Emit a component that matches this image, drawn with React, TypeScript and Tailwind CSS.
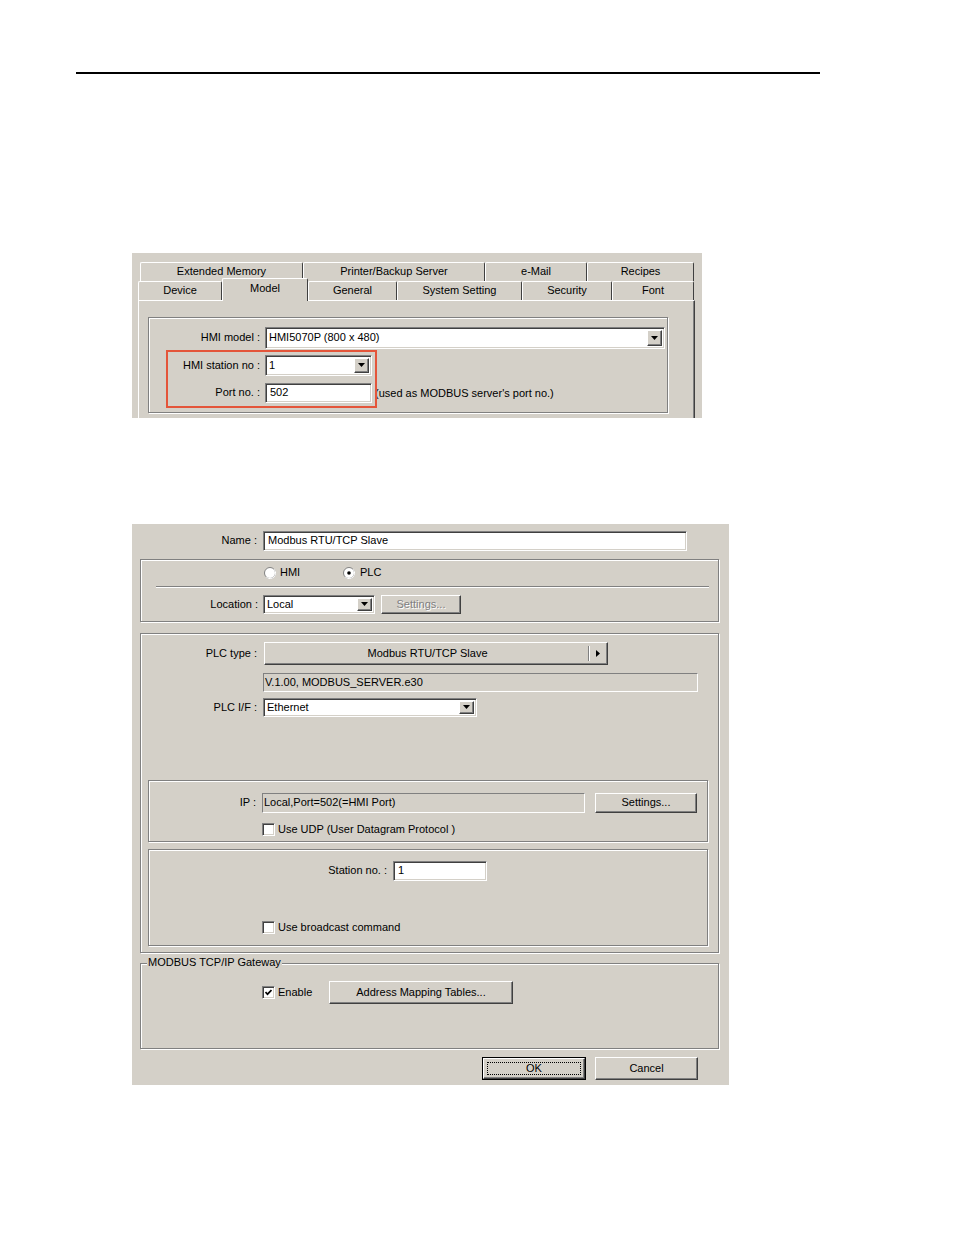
import React from "react";

type Kids = { className?: string; children?: React.ReactNode };

function DownArrow() {
  return (
    <svg width="7" height="4" viewBox="0 0 7 4">
      <path d="M0 0h7L3.5 4z" fill="#000" />
    </svg>
  );
}

function Raised({ className = "", children }: Kids) {
  return (
    <div
      className={`flex items-center justify-center bg-[#d4d0c8] border border-t-white border-l-white border-b-[#404040] border-r-[#404040] shadow-[inset_-1px_-1px_0_#808080] ${className}`}
    >
      {children}
    </div>
  );
}

function Sunken({ className = "", children }: Kids) {
  return (
    <div
      className={`flex items-center bg-white border border-t-[#808080] border-l-[#808080] border-b-white border-r-white shadow-[inset_1px_1px_0_#404040,inset_-1px_-1px_0_#d4d0c8] ${className}`}
    >
      {children}
    </div>
  );
}

function Combo({ className = "", value }: { className?: string; value: string }) {
  return (
    <Sunken className={className}>
      <span className="flex-1 pl-[3px]">{value}</span>
      <Raised className="self-stretch my-[2px] mr-[2px] w-[15px]">
        <DownArrow />
      </Raised>
    </Sunken>
  );
}

// static edge field, gray inside
function Field({ className = "", children }: Kids) {
  return (
    <div
      className={`flex items-center pl-px border border-t-[#808080] border-l-[#808080] border-b-white border-r-white ${className}`}
    >
      {children}
    </div>
  );
}

function Check({ checked = false }: { checked?: boolean }) {
  return (
    <div className="w-[13px] h-[13px] flex items-center justify-center bg-white border border-t-[#808080] border-l-[#808080] border-b-white border-r-white shadow-[inset_1px_1px_0_#404040,inset_-1px_-1px_0_#d4d0c8]">
      {checked && (
        <svg width="7" height="7" viewBox="0 0 7 7">
          <path d="M0.5 3l2 2.2L6.5 1" stroke="#000" strokeWidth="1.7" fill="none" />
        </svg>
      )}
    </div>
  );
}

function Radio({ on = false }: { on?: boolean }) {
  return (
    <svg width="12" height="12" viewBox="0 0 12 12">
      <circle cx="6" cy="6" r="5.5" fill="#fff" stroke="#808080" />
      <path d="M10 2.2A5.5 5.5 0 0 1 2.2 10" stroke="#fff" fill="none" />
      {on && <circle cx="6" cy="6" r="1.8" fill="#000" />}
    </svg>
  );
}

function Group({ className = "", children }: Kids) {
  return (
    <div
      className={`relative border border-[#808080] shadow-[1px_1px_0_#fff,inset_1px_1px_0_#fff] ${className}`}
    >
      {children}
    </div>
  );
}

function Tab({ w, label, active = false }: { w: string; label: string; active?: boolean }) {
  return (
    <div
      className={`flex justify-center border-t border-l border-r border-t-white border-l-white border-r-[#404040] rounded-t-[2px] bg-[#d4d0c8] ${w} ${
        active ? "h-[23px] -mb-px relative z-10 pt-[4px] items-start" : "h-[19px] items-center"
      }`}
    >
      {label}
    </div>
  );
}

function ModelDialog() {
  return (
    <div className="w-[570px] h-[165px] bg-[#d4d0c8] overflow-hidden flex flex-col">
      <div className="flex ml-[8px] mt-[9px]">
        <Tab w="w-[163px]" label="Extended Memory" />
        <Tab w="w-[182px]" label="Printer/Backup Server" />
        <Tab w="w-[102px]" label="e-Mail" />
        <Tab w="w-[107px]" label="Recipes" />
      </div>
      <div className="flex items-end ml-[6px] h-[19px]">
        <Tab w="w-[84px]" label="Device" />
        <Tab w="w-[86px]" label="Model" active />
        <Tab w="w-[89px]" label="General" />
        <Tab w="w-[125px]" label="System Setting" />
        <Tab w="w-[90px]" label="Security" />
        <Tab w="w-[82px]" label="Font" />
      </div>
      <div className="ml-[6px] w-[557px] flex-1 border-t border-l border-r border-t-white border-l-white border-r-[#404040] shadow-[inset_-1px_0_0_#808080]">
        <Group className="ml-[9px] mt-[16px] w-[520px] h-[96px]">
          <div className="flex items-center mt-[9px] h-[22px]">
            <span className="w-[111px] text-right">HMI model :</span>
            <Combo className="ml-[5px] w-[400px] h-[22px]" value="HMI5070P (800 x 480)" />
          </div>
          <div className="flex items-center mt-[6px] h-[21px]">
            <span className="w-[111px] text-right">HMI station no :</span>
            <Combo className="ml-[5px] w-[107px] h-[21px]" value="1" />
          </div>
          <div className="flex items-center mt-[7px] h-[20px]">
            <span className="w-[111px] text-right">Port no. :</span>
            <Sunken className="ml-[5px] w-[107px] h-[20px] pl-[4px]">502</Sunken>
            <span className="ml-[3px] mt-[2px]">(used as MODBUS server's port no.)</span>
          </div>
          <div className="absolute left-[17px] top-[32px] w-[211px] h-[58px] border-2 border-[#e4553a]" />
        </Group>
      </div>
    </div>
  );
}

function PlcDialog() {
  return (
    <div className="w-[597px] h-[561px] bg-[#d4d0c8] flex flex-col">
      <div className="flex items-center mt-[7px] h-[20px]">
        <span className="w-[125px] text-right">Name :</span>
        <Sunken className="ml-[6px] w-[424px] h-[20px] pl-[4px]">Modbus RTU/TCP Slave</Sunken>
      </div>

      <Group className="ml-[8px] mt-[8px] w-[579px] h-[63px]">
        <div className="flex items-center mt-[6px] h-[14px] ml-[123px]">
          <div className="flex items-center gap-[4px] w-[79px]">
            <Radio />
            <span>HMI</span>
          </div>
          <div className="flex items-center gap-[5px]">
            <Radio on />
            <span>PLC</span>
          </div>
        </div>
        <div className="ml-[15px] mt-[6px] w-[553px] h-[2px] border-t border-t-[#808080] border-b border-b-white" />
        <div className="flex items-center mt-[7px] h-[19px]">
          <span className="w-[117px] text-right">Location :</span>
          <Combo className="ml-[5px] w-[112px] h-[19px]" value="Local" />
          <Raised className="ml-[6px] w-[80px] h-[19px] text-[#808080] [text-shadow:1px_1px_0_#fff]">
            Settings...
          </Raised>
        </div>
      </Group>

      <Group className="ml-[8px] mt-[11px] w-[579px] h-[320px]">
        <div className="flex items-center mt-[8px] h-[23px]">
          <span className="w-[116px] text-right">PLC type :</span>
          <Raised className="ml-[7px] w-[344px] h-[23px] !justify-start">
            <span className="flex-1 text-center pl-[2px]">Modbus RTU/TCP Slave</span>
            <div className="w-px h-[15px] bg-[#808080] shadow-[1px_0_0_#fff]" />
            <div className="w-[18px] flex items-center justify-center">
              <svg width="4" height="7" viewBox="0 0 4 7">
                <path d="M0 0v7l4-3.5z" fill="#000" />
              </svg>
            </div>
          </Raised>
        </div>
        <Field className="ml-[122px] mt-[8px] w-[435px] h-[19px]">V.1.00, MODBUS_SERVER.e30</Field>
        <div className="flex items-center mt-[6px] h-[19px]">
          <span className="w-[116px] text-right">PLC I/F :</span>
          <Combo className="ml-[6px] w-[214px] h-[19px]" value="Ethernet" />
        </div>

        <Group className="ml-[7px] mt-[63px] w-[560px] h-[62px]">
          <div className="flex items-center mt-[12px] h-[20px]">
            <span className="w-[107px] text-right">IP :</span>
            <Field className="ml-[6px] w-[323px] h-[20px]">Local,Port=502(=HMI Port)</Field>
            <Raised className="ml-[10px] w-[102px] h-[20px]">Settings...</Raised>
          </div>
          <div className="flex items-center gap-[3px] ml-[113px] mt-[10px] h-[13px]">
            <Check />
            <span>Use UDP (User Datagram Protocol )</span>
          </div>
        </Group>

        <Group className="ml-[7px] mt-[7px] w-[560px] h-[97px]">
          <div className="flex items-center mt-[11px] h-[20px]">
            <span className="w-[238px] text-right">Station no. :</span>
            <Sunken className="ml-[6px] w-[94px] h-[20px] pl-[4px]">1</Sunken>
          </div>
          <div className="flex items-center gap-[3px] ml-[113px] mt-[40px] h-[13px]">
            <Check />
            <span>Use broadcast command</span>
          </div>
        </Group>
      </Group>

      <Group className="ml-[8px] mt-[10px] w-[579px] h-[86px]">
        <span className="absolute left-[6px] -top-[7px] bg-[#d4d0c8] px-px">MODBUS TCP/IP Gateway</span>
        <div className="flex items-center mt-[17px] h-[23px]">
          <div className="flex items-center gap-[3px] ml-[121px] w-[67px]">
            <Check checked />
            <span>Enable</span>
          </div>
          <Raised className="w-[184px] h-[23px]">Address Mapping Tables...</Raised>
        </div>
      </Group>

      <div className="flex mt-[8px] h-[23px] ml-[350px]">
        <div className="w-[104px] h-[23px] border border-black">
          <Raised className="relative w-full h-full">
            <div className="absolute inset-[3px] border border-dotted border-black" />
            OK
          </Raised>
        </div>
        <Raised className="ml-[9px] w-[103px] h-[23px]">Cancel</Raised>
      </div>
    </div>
  );
}

export default function App() {
  return (
    <div className="w-[954px] h-[1235px] bg-white font-['Liberation_Sans',Arial,sans-serif] text-[11px] leading-none text-black flex flex-col">
      <div className="ml-[76px] mt-[72px] w-[744px] h-[1.5px] bg-black" />
      <div className="ml-[132px] mt-[179px]">
        <ModelDialog />
      </div>
      <div className="ml-[132px] mt-[106px]">
        <PlcDialog />
      </div>
    </div>
  );
}
